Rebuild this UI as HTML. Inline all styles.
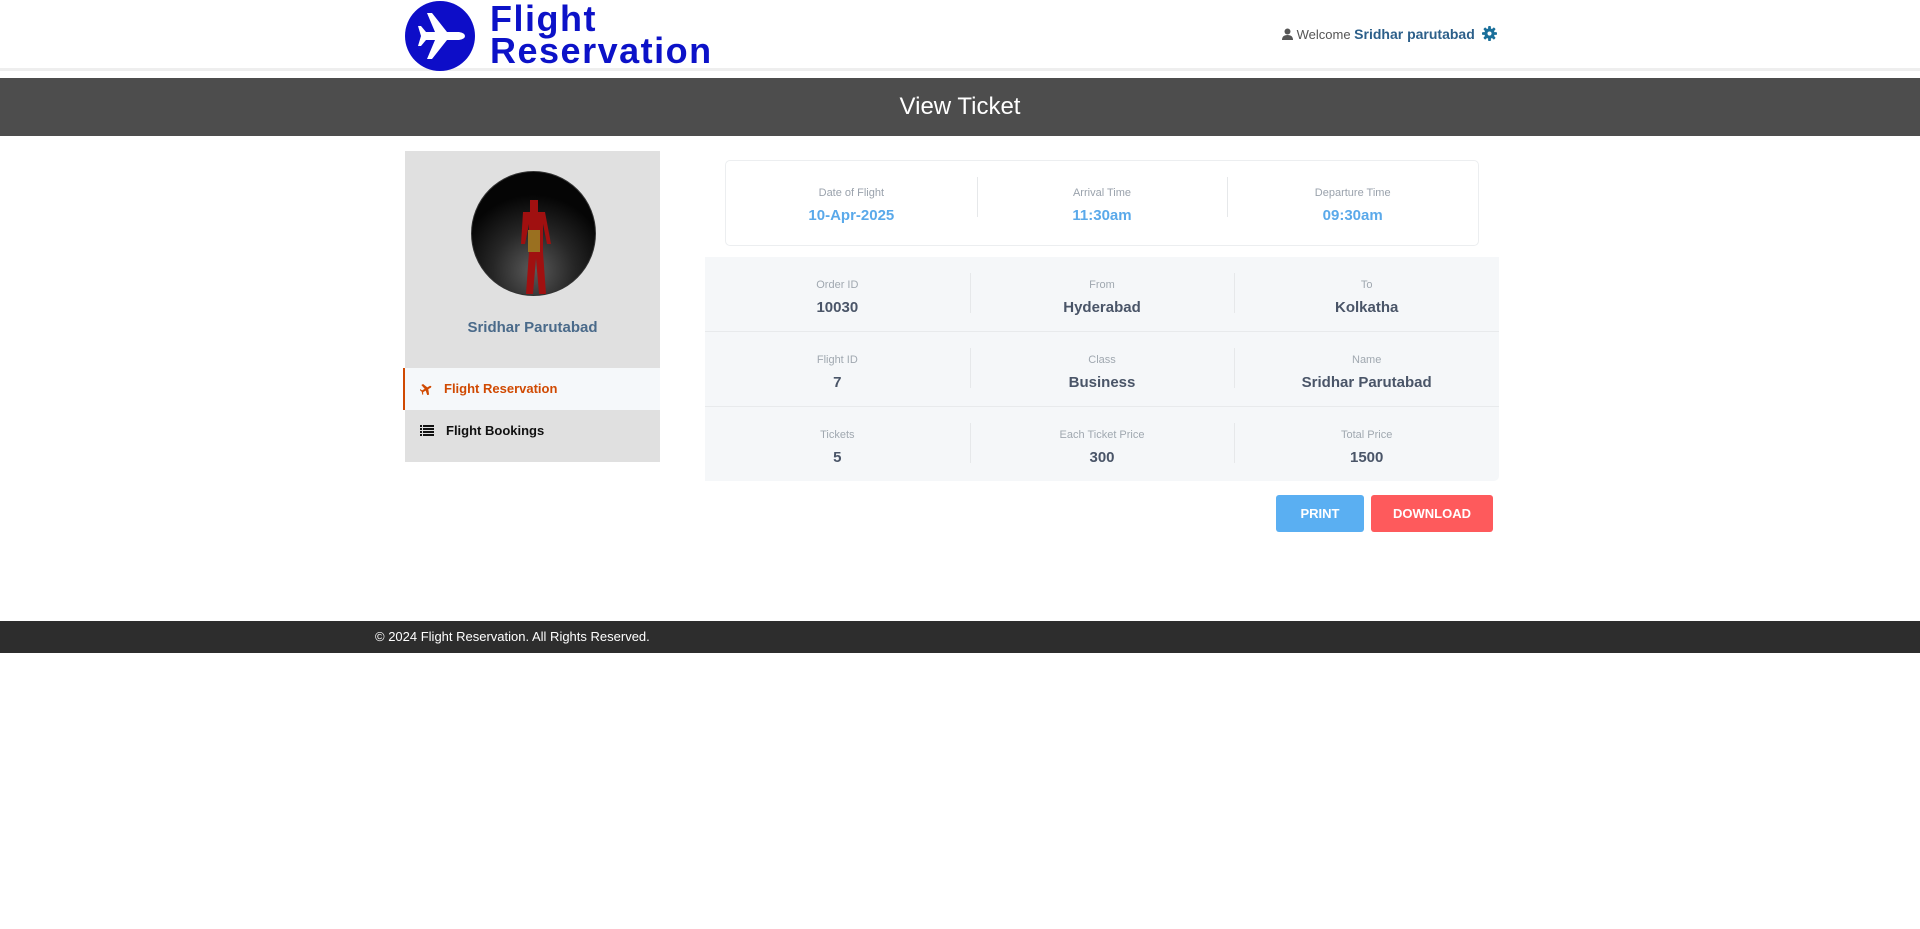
<!DOCTYPE html>
<html><head><meta charset="utf-8"><style>
*{box-sizing:border-box;margin:0;padding:0}
body{width:1920px;height:929px;background:#fff;font-family:"Liberation Sans",sans-serif;position:relative;overflow:hidden}
.abs{position:absolute}
.hdr{left:0;top:0;width:1920px;height:71px;border-bottom:3px solid #eee}
.logo{left:405px;top:1px;width:70px;height:70px;border-radius:50%;background:#0d0dc8}
.ltext{left:490px;top:3px;color:#0c12c8;font-weight:bold;font-size:36px;line-height:32px;letter-spacing:1.5px}
.welcome{left:1282px;top:26px;font-size:13px;color:#555;white-space:nowrap}
.welcome b{color:#2c5f8a;font-size:14px}
.bar{left:0;top:78px;width:1920px;height:58px;background:#4d4d4d;color:#fff;font-size:24px;text-align:center;line-height:58px}
.side{left:405px;top:151px;width:255px;height:311px;background:#e0e0e0}
.av{left:128px;top:20px;width:125px;height:125px;border-radius:50%;background:radial-gradient(circle at 50% 80%,#5a5a5a 0,#262626 35%,#050505 65%);border:1px solid #333;overflow:hidden;margin-left:-62px}
.nm{left:0;top:168px;width:255px;text-align:center;color:#4a6a8a;font-size:15px;font-weight:bold}
.it1{left:-2px;top:217px;width:257px;height:42px;background:#f5f8fa;border-left:2px solid #d04a02;color:#d04a02;font-weight:bold;font-size:13px;line-height:42px;padding-left:39px}
.it2{left:0;top:259px;width:255px;height:52px;color:#111;font-weight:bold;font-size:13px;line-height:42px;padding-left:41px}
.card{left:725px;top:160px;width:754px;height:86px;border:1px solid #eceef0;border-radius:5px;display:flex}
.card div,.row div{flex:1;text-align:center;position:relative}
.card div+div:before,.row div+div:before{content:"";position:absolute;left:0;top:16px;height:40px;border-left:1px solid #e6e8ea}
.lab{display:block;font-size:11px;color:#9aa2ac;margin-top:26px}
.cv{display:block;font-size:15px;font-weight:bold;color:#5aa9ea;margin-top:8px}
.tbl{left:705px;top:257px;width:794px;height:224px;background:#f5f7f9;border-radius:0 0 5px 0}
.row{display:flex;height:75px;border-bottom:1px solid #e8eaec}
.row:last-child{border-bottom:none}
.row .lab{margin-top:22px;color:#a0a8b0}
.rv{display:block;font-size:15px;font-weight:bold;color:#4a5568;margin-top:8px}
.btn{top:495px;height:37px;border-radius:3px;color:#fff;font-weight:bold;font-size:13px;text-align:center;line-height:37px}
.foot{left:0;top:621px;width:1920px;height:32px;background:#2d2d2d;color:#fff;font-size:13px;line-height:32px;padding-left:375px}
</style></head><body>
<div class="abs hdr"></div>
<div class="abs logo"><svg width="70" height="70" viewBox="0 0 70 70"><path d="M22 12 L27 12 L42 31 L54 31 Q60 32 60 35 Q60 38 54 39 L42 39 L27 58 L22 58 L30 39 L21 39 L16 45 L13 45 L16 35 L13 25 L16 25 L21 31 L30 31 Z" fill="#fff"/></svg></div>
<div class="abs ltext">Flight<br>Reservation</div>
<div class="abs welcome"><svg width="11" height="12" viewBox="0 0 11 12" style="vertical-align:-1px"><circle cx="5.5" cy="3.5" r="3" fill="#555"/><path d="M0 12 Q0 7 5.5 7 Q11 7 11 12Z" fill="#555"/></svg> Welcome <b>Sridhar parutabad</b> &nbsp;<svg width="15" height="15" viewBox="0 0 16 16" style="vertical-align:-2px"><g fill="#1a6f9a"><circle cx="8" cy="8" r="5.5"/><rect x="6.5" y="0" width="3" height="16" rx="1"/><rect x="0" y="6.5" width="16" height="3" rx="1"/><rect x="6.5" y="0" width="3" height="16" rx="1" transform="rotate(45 8 8)"/><rect x="6.5" y="0" width="3" height="16" rx="1" transform="rotate(-45 8 8)"/></g><circle cx="8" cy="8" r="2.2" fill="#fff"/></svg></div>
<div class="abs bar">View Ticket</div>
<div class="abs side">
<div class="abs av"><svg width="125" height="125" viewBox="0 0 125 125"><path d="M58 28 h8 v12 h-8z M51 40 h22 l6 32 h-4 l-4 -20 v28 l3 42 h-7 l-3 -36 l-3 36 h-7 l3 -42 v-28 l-4 20 h-4z" fill="#a01010"/><path d="M56 58 h12 v22 h-12z" fill="#9a7020"/></svg></div>
<div class="abs nm">Sridhar Parutabad</div>
<div class="abs it1"><svg width="13" height="12" viewBox="0 0 13 12" style="position:absolute;left:15px;top:15px"><path d="M4 0 L6 0 L8 5 L11 5 Q13 6 11 7 L8 7 L6 12 L4 12 L5 7 L2 7 L1 9 L0 9 L1 6 L0 3 L1 3 L2 5 L5 5Z" fill="#d04a02" transform="rotate(-30 6.5 6)"/></svg>Flight Reservation</div>
<div class="abs it2"><svg width="14" height="11" viewBox="0 0 14 11" style="position:absolute;left:15px;top:15px"><g fill="#111"><rect x="0" y="0" width="2" height="2"/><rect x="3" y="0" width="11" height="2"/><rect x="0" y="3" width="2" height="2"/><rect x="3" y="3" width="11" height="2"/><rect x="0" y="6" width="2" height="2"/><rect x="3" y="6" width="11" height="2"/><rect x="0" y="9" width="2" height="2"/><rect x="3" y="9" width="11" height="2"/></g></svg>Flight Bookings</div>
</div>
<div class="abs card">
<div><span class="lab">Date of Flight</span><span class="cv">10-Apr-2025</span></div>
<div><span class="lab">Arrival Time</span><span class="cv">11:30am</span></div>
<div><span class="lab">Departure Time</span><span class="cv">09:30am</span></div>
</div>
<div class="abs tbl">
<div class="row"><div><span class="lab">Order ID</span><span class="rv">10030</span></div><div><span class="lab">From</span><span class="rv">Hyderabad</span></div><div><span class="lab">To</span><span class="rv">Kolkatha</span></div></div>
<div class="row"><div><span class="lab">Flight ID</span><span class="rv">7</span></div><div><span class="lab">Class</span><span class="rv">Business</span></div><div><span class="lab">Name</span><span class="rv">Sridhar Parutabad</span></div></div>
<div class="row"><div><span class="lab">Tickets</span><span class="rv">5</span></div><div><span class="lab">Each Ticket Price</span><span class="rv">300</span></div><div><span class="lab">Total Price</span><span class="rv">1500</span></div></div>
</div>
<div class="abs btn" style="left:1276px;width:88px;background:#5aaff2">PRINT</div>
<div class="abs btn" style="left:1371px;width:122px;background:#fe5a5c">DOWNLOAD</div>
<div class="abs foot">© 2024 Flight Reservation. All Rights Reserved.</div>
</body></html>
